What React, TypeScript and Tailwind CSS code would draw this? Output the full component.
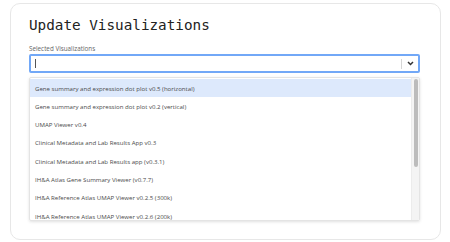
import React from 'react';

const items = [
  'Gene summary and expression dot plot v0.5 (horizontal)',
  'Gene summary and expression dot plot v0.2 (vertical)',
  'UMAP Viewer v0.4',
  'Clinical Metadata and Lab Results App v0.3',
  'Clinical Metadata and Lab Results app (v0.3.1)',
  'IH&A Atlas Gene Summary Viewer (v0.7.7)',
  'IH&A Reference Atlas UMAP Viewer v0.2.5 (300k)',
  'IH&A Reference Atlas UMAP Viewer v0.2.6 (200k)',
];

export default function App() {
  return (
    <div className="w-[450px] h-[242px] bg-white pt-[3px] pl-[10px] overflow-hidden">
      <div className="w-[431px] h-[237px] border border-[#e7e7e7] rounded-[10px] pl-[18px] pr-[20px] pt-[12px] overflow-hidden">
        <h1 className="font-['DejaVu_Sans_Mono',monospace] text-[14.3px] leading-[18px] text-[#222]">
          Update Visualizations
        </h1>
        <div className="mt-[11px] font-['Open_Sans',sans-serif] text-[6.3px] leading-[8px] text-[#666]">
          Selected Visualizations
        </div>
        <div className="mt-px h-[19px] w-[391px] border-2 border-[#72a8f7] rounded-[2px] flex items-center">
          <div className="flex-1 pl-[4px] flex items-center">
            <div className="w-px h-[9px] bg-[#555]" />
          </div>
          <div className="w-px h-[10px] bg-[#d6d6d6]" />
          <div className="w-[16px] flex justify-center">
            <svg width="7" height="5" viewBox="0 0 7 5">
              <path d="M1 1 L3.5 3.5 L6 1" stroke="#333" strokeWidth="1.5" fill="none" />
            </svg>
          </div>
        </div>
        <div className="mt-[4px] h-[144px] w-[391px] border border-[#e4e4e4] rounded-[2px] shadow-[0_1px_3px_rgba(0,0,0,0.12)] flex overflow-hidden">
          <div className="flex-1 pt-px font-['Open_Sans',sans-serif] text-[6.1px] text-[#4a4a4a] overflow-hidden">
            {items.map((t, i) => (
              <div
                key={t}
                className={`h-[18.3px] flex items-center pl-[5px] ${i === 0 ? 'bg-[#dde9fc]' : ''}`}
              >
                {t}
              </div>
            ))}
          </div>
          <div className="w-[8px] bg-[#f4f4f4] border-l border-[#ececec] pt-px flex justify-center">
            <div className="w-[4px] h-[88px] bg-[#bcbcbc] rounded-[2px]" />
          </div>
        </div>
      </div>
    </div>
  );
}
